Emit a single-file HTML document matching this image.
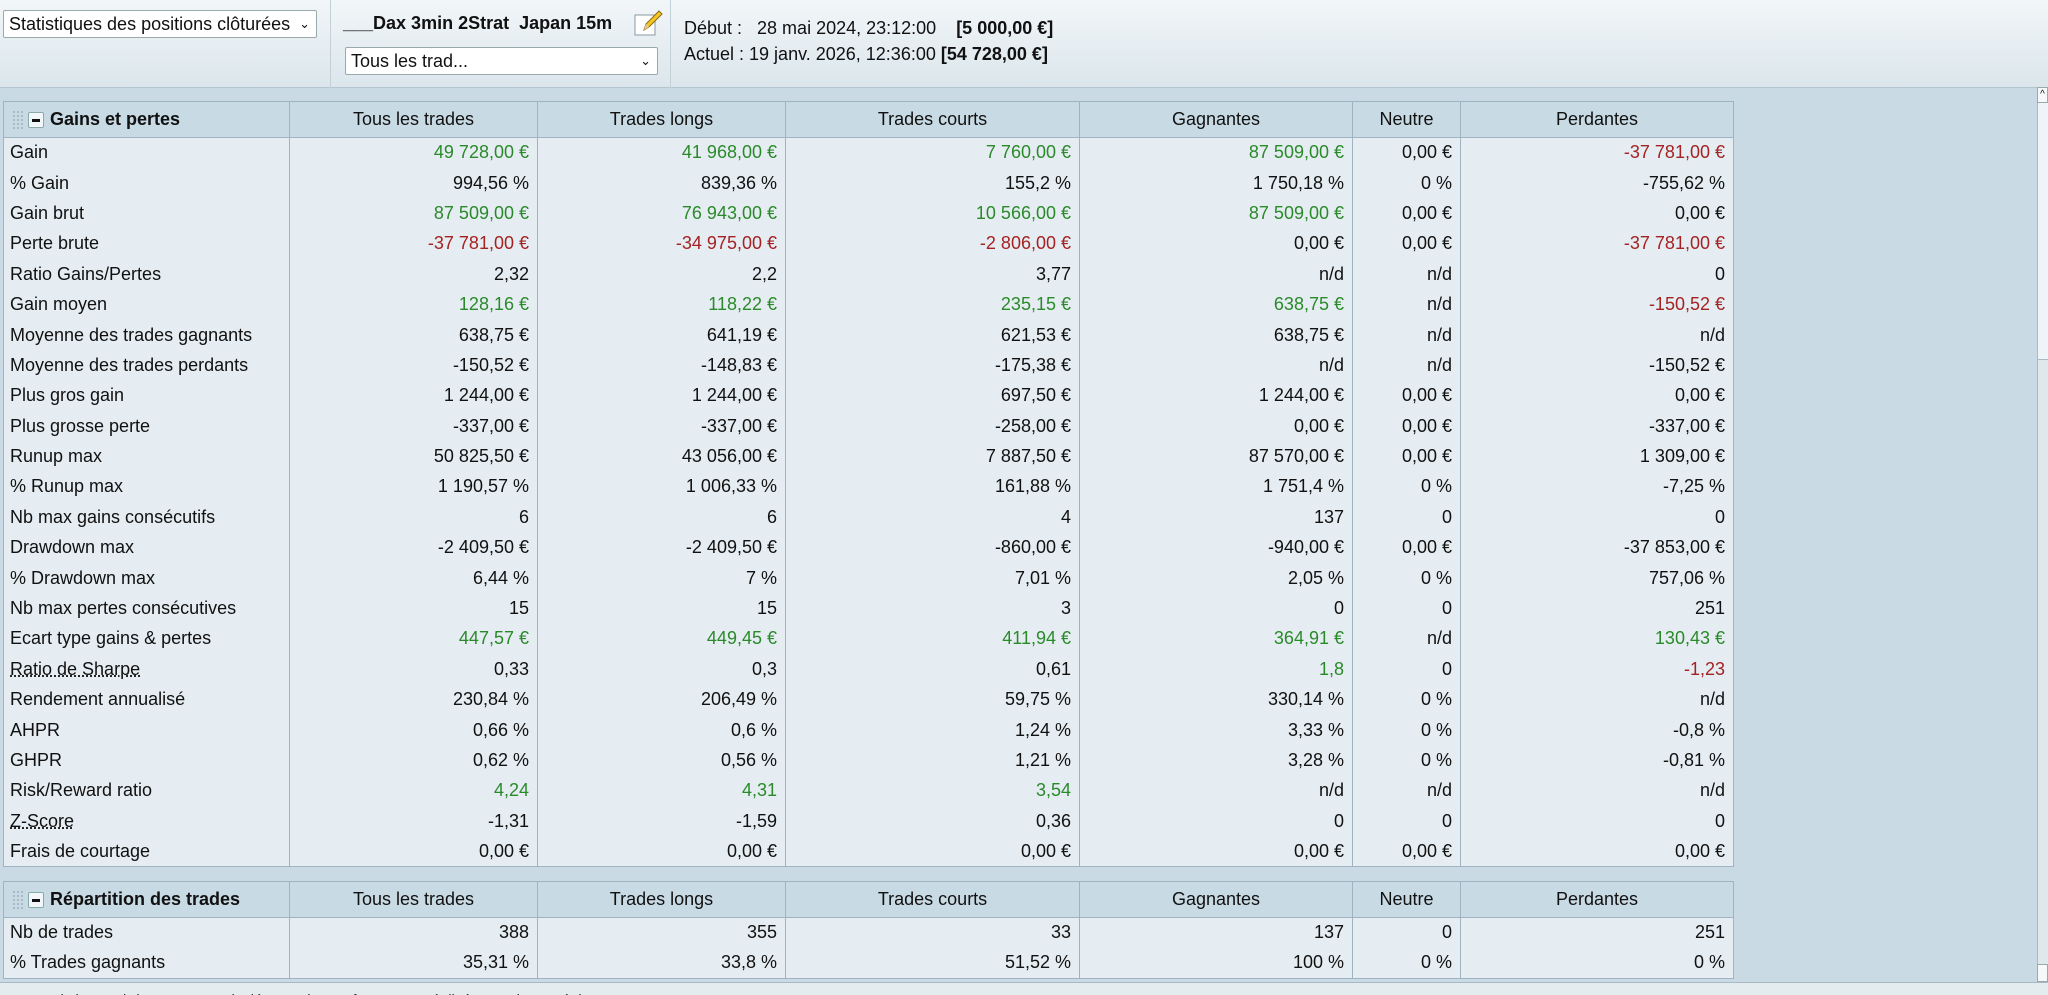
<!DOCTYPE html>
<html><head><meta charset="utf-8"><style>
*{box-sizing:border-box}
body{margin:0;width:2048px;height:995px;overflow:hidden;background:#c9dae4;font-family:"Liberation Sans",Arial,sans-serif;font-size:18px;color:#111;position:relative}
.hdr{position:absolute;left:0;top:0;width:2048px;height:88px;background:linear-gradient(#f2f6f8,#dbe6ec);border-bottom:1px solid #b5c6d0}
.sel{position:absolute;background:#fff;border:1px solid #9aa;border-radius:2px;font-size:18px;padding:3px 5px;line-height:20px}
.sel .ar{position:absolute;right:6px;top:3px;font-size:13px}
.vs{position:absolute;top:0;width:1px;height:88px;background:#c2d0d8}
table{position:absolute;left:3px;border-collapse:collapse;table-layout:fixed;width:1730px}
td,th{border-left:1px solid #9fb3c0;border-right:1px solid #9fb3c0;padding:0 8px;white-space:nowrap;height:30.4px}
th{background:#c8dae4;font-weight:normal;height:36px;border:1px solid #9fb3c0;text-align:center}
th.f{text-align:left;font-weight:bold;padding-left:8px}
td{background:#e5edf2;text-align:right}
td:first-child{text-align:left;padding-left:6px}
tr:last-child td{border-bottom:1px solid #9fb3c0}
.g{color:#2a8a2a}.r{color:#a52222}
.u{text-decoration:underline dotted}
.grip{display:inline-block;width:12px;height:20px;vertical-align:middle;background-image:radial-gradient(#a8b8c2 1px,transparent 1.2px);background-size:4px 4px;margin-right:4px}
.mn{display:inline-block;width:16px;height:16px;border:1px solid #8aa;background:#f4f7f9;vertical-align:middle;position:relative;margin-right:6px;border-radius:2px}
.mn:after{content:"";position:absolute;left:3px;top:6px;width:8px;height:3px;background:#111}
</style></head><body>
<div class="hdr">
<div class="sel" style="left:3px;top:10px;width:314px;height:28px">Statistiques des positions clôturées<span class="ar">&#8964;</span></div>
<div class="vs" style="left:330px"></div>
<div style="position:absolute;left:343px;top:13px;font-weight:bold">___Dax 3min 2Strat&nbsp; Japan 15m</div>
<svg style="position:absolute;left:634px;top:9px" width="30" height="30" viewBox="0 0 30 30"><rect x="1" y="6" width="20" height="20" fill="#fff" stroke="#8a9aa4"/><path d="M10 21 L12 15 L25 2 L28 5 L15 18 Z" fill="#f3c623" stroke="#8a6a10"/><path d="M10 21 L12 15 L15 18Z" fill="#e8c89a"/></svg>
<div class="sel" style="left:345px;top:47px;width:313px;height:28px">Tous les trad...<span class="ar">&#8964;</span></div>
<div class="vs" style="left:670px"></div>
<div style="position:absolute;left:684px;top:18px">Début :&nbsp;&nbsp; 28 mai 2024, 23:12:00&nbsp;&nbsp;&nbsp; <b>[5 000,00 €]</b></div>
<div style="position:absolute;left:684px;top:44px">Actuel : 19 janv. 2026, 12:36:00 <b>[54 728,00 €]</b></div>
</div>

<table style="top:101px">
<colgroup><col style="width:286px"><col style="width:248px"><col style="width:248px"><col style="width:294px"><col style="width:273px"><col style="width:108px"><col style="width:273px"></colgroup>
<tr><th class="f"><span class="grip"></span><span class="mn"></span>Gains et pertes</th><th>Tous les trades</th><th>Trades longs</th><th>Trades courts</th><th>Gagnantes</th><th>Neutre</th><th>Perdantes</th></tr>
<tr><td>Gain</td><td class="g">49 728,00 €</td><td class="g">41 968,00 €</td><td class="g">7 760,00 €</td><td class="g">87 509,00 €</td><td>0,00 €</td><td class="r">-37 781,00 €</td></tr>
<tr><td>% Gain</td><td>994,56 %</td><td>839,36 %</td><td>155,2 %</td><td>1 750,18 %</td><td>0 %</td><td>-755,62 %</td></tr>
<tr><td>Gain brut</td><td class="g">87 509,00 €</td><td class="g">76 943,00 €</td><td class="g">10 566,00 €</td><td class="g">87 509,00 €</td><td>0,00 €</td><td>0,00 €</td></tr>
<tr><td>Perte brute</td><td class="r">-37 781,00 €</td><td class="r">-34 975,00 €</td><td class="r">-2 806,00 €</td><td>0,00 €</td><td>0,00 €</td><td class="r">-37 781,00 €</td></tr>
<tr><td>Ratio Gains/Pertes</td><td>2,32</td><td>2,2</td><td>3,77</td><td>n/d</td><td>n/d</td><td>0</td></tr>
<tr><td>Gain moyen</td><td class="g">128,16 €</td><td class="g">118,22 €</td><td class="g">235,15 €</td><td class="g">638,75 €</td><td>n/d</td><td class="r">-150,52 €</td></tr>
<tr><td>Moyenne des trades gagnants</td><td>638,75 €</td><td>641,19 €</td><td>621,53 €</td><td>638,75 €</td><td>n/d</td><td>n/d</td></tr>
<tr><td>Moyenne des trades perdants</td><td>-150,52 €</td><td>-148,83 €</td><td>-175,38 €</td><td>n/d</td><td>n/d</td><td>-150,52 €</td></tr>
<tr><td>Plus gros gain</td><td>1 244,00 €</td><td>1 244,00 €</td><td>697,50 €</td><td>1 244,00 €</td><td>0,00 €</td><td>0,00 €</td></tr>
<tr><td>Plus grosse perte</td><td>-337,00 €</td><td>-337,00 €</td><td>-258,00 €</td><td>0,00 €</td><td>0,00 €</td><td>-337,00 €</td></tr>
<tr><td>Runup max</td><td>50 825,50 €</td><td>43 056,00 €</td><td>7 887,50 €</td><td>87 570,00 €</td><td>0,00 €</td><td>1 309,00 €</td></tr>
<tr><td>% Runup max</td><td>1 190,57 %</td><td>1 006,33 %</td><td>161,88 %</td><td>1 751,4 %</td><td>0 %</td><td>-7,25 %</td></tr>
<tr><td>Nb max gains consécutifs</td><td>6</td><td>6</td><td>4</td><td>137</td><td>0</td><td>0</td></tr>
<tr><td>Drawdown max</td><td>-2 409,50 €</td><td>-2 409,50 €</td><td>-860,00 €</td><td>-940,00 €</td><td>0,00 €</td><td>-37 853,00 €</td></tr>
<tr><td>% Drawdown max</td><td>6,44 %</td><td>7 %</td><td>7,01 %</td><td>2,05 %</td><td>0 %</td><td>757,06 %</td></tr>
<tr><td>Nb max pertes consécutives</td><td>15</td><td>15</td><td>3</td><td>0</td><td>0</td><td>251</td></tr>
<tr><td>Ecart type gains &amp; pertes</td><td class="g">447,57 €</td><td class="g">449,45 €</td><td class="g">411,94 €</td><td class="g">364,91 €</td><td>n/d</td><td class="g">130,43 €</td></tr>
<tr><td><span class="u">Ratio de Sharpe</span></td><td>0,33</td><td>0,3</td><td>0,61</td><td class="g">1,8</td><td>0</td><td class="r">-1,23</td></tr>
<tr><td>Rendement annualisé</td><td>230,84 %</td><td>206,49 %</td><td>59,75 %</td><td>330,14 %</td><td>0 %</td><td>n/d</td></tr>
<tr><td>AHPR</td><td>0,66 %</td><td>0,6 %</td><td>1,24 %</td><td>3,33 %</td><td>0 %</td><td>-0,8 %</td></tr>
<tr><td>GHPR</td><td>0,62 %</td><td>0,56 %</td><td>1,21 %</td><td>3,28 %</td><td>0 %</td><td>-0,81 %</td></tr>
<tr><td>Risk/Reward ratio</td><td class="g">4,24</td><td class="g">4,31</td><td class="g">3,54</td><td>n/d</td><td>n/d</td><td>n/d</td></tr>
<tr><td><span class="u">Z-Score</span></td><td>-1,31</td><td>-1,59</td><td>0,36</td><td>0</td><td>0</td><td>0</td></tr>
<tr><td>Frais de courtage</td><td>0,00 €</td><td>0,00 €</td><td>0,00 €</td><td>0,00 €</td><td>0,00 €</td><td>0,00 €</td></tr>
</table>

<table style="top:881px">
<colgroup><col style="width:286px"><col style="width:248px"><col style="width:248px"><col style="width:294px"><col style="width:273px"><col style="width:108px"><col style="width:273px"></colgroup>
<tr><th class="f"><span class="grip"></span><span class="mn"></span>Répartition des trades</th><th>Tous les trades</th><th>Trades longs</th><th>Trades courts</th><th>Gagnantes</th><th>Neutre</th><th>Perdantes</th></tr>
<tr><td>Nb de trades</td><td>388</td><td>355</td><td>33</td><td>137</td><td>0</td><td>251</td></tr>
<tr><td>% Trades gagnants</td><td>35,31 %</td><td>33,8 %</td><td>51,52 %</td><td>100 %</td><td>0 %</td><td>0 %</td></tr>
</table>

<div style="position:absolute;left:2037px;top:87px;width:11px;height:898px;background:#dfe8ed;border-left:1px solid #a9b9c3"></div>
<div style="position:absolute;left:2037px;top:87px;width:11px;height:16px;background:#f6f8fa;border:1px solid #9aa;font-size:10px;line-height:14px;text-align:center">^</div>
<div style="position:absolute;left:2038px;top:103px;width:10px;height:257px;background:#eef4f7;border-bottom:1px solid #a9b9c3"></div>
<div style="position:absolute;left:2037px;top:964px;width:11px;height:18px;background:#f6f8fa;border:1px solid #9aa"></div>
<div style="position:absolute;left:0;top:982px;width:2048px;height:13px;background:#e4ecf0;border-top:1px solid #a9b9c3;overflow:hidden"><div style="position:relative;left:8px;top:9px;font-size:15px;color:#333">Les statistiques ci-dessus sont calculées sur les performances réalisées par la stratégie</div></div>
</body></html>
